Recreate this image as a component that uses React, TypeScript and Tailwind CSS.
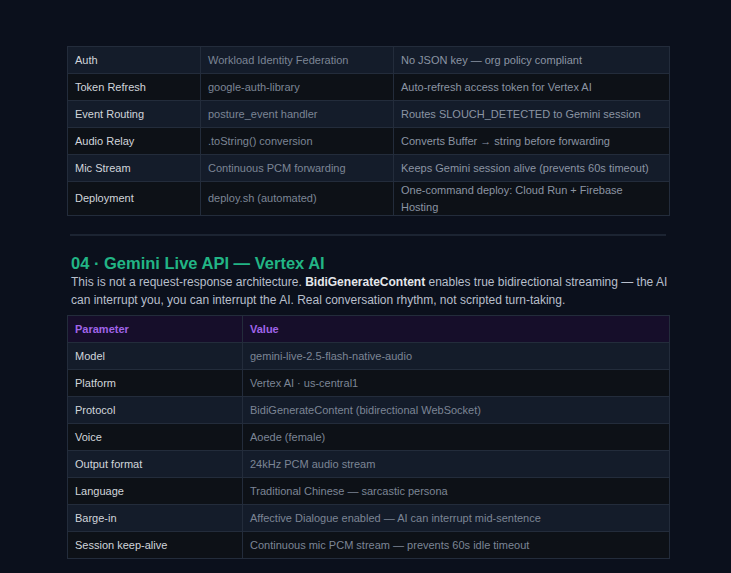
const rows1 = [
  ["Auth", "Workload Identity Federation", "No JSON key — org policy compliant"],
  ["Token Refresh", "google-auth-library", "Auto-refresh access token for Vertex AI"],
  ["Event Routing", "posture_event handler", "Routes SLOUCH_DETECTED to Gemini session"],
  ["Audio Relay", ".toString() conversion", "Converts Buffer → string before forwarding"],
  ["Mic Stream", "Continuous PCM forwarding", "Keeps Gemini session alive (prevents 60s timeout)"],
  ["Deployment", "deploy.sh (automated)", "One-command deploy: Cloud Run + Firebase Hosting"],
];

const rows2 = [
  ["Model", "gemini-live-2.5-flash-native-audio"],
  ["Platform", "Vertex AI · us-central1"],
  ["Protocol", "BidiGenerateContent (bidirectional WebSocket)"],
  ["Voice", "Aoede (female)"],
  ["Output format", "24kHz PCM audio stream"],
  ["Language", "Traditional Chinese — sarcastic persona"],
  ["Barge-in", "Affective Dialogue enabled — AI can interrupt mid-sentence"],
  ["Session keep-alive", "Continuous mic PCM stream — prevents 60s idle timeout"],
];

const rowBg = (i: number) => (i % 2 === 0 ? "bg-[#141c2a]" : "bg-[#0d1117]");

const App = () => {
  return (
    <div className="h-[573px] overflow-hidden bg-[#0b101c] pt-[46px] font-[Liberation_Sans,Arial,sans-serif] text-[11px]">
      <div className="ml-[67px] w-[603px]">
        <table className="w-full border-collapse border border-[#232c3b]">
          <tbody>
            {rows1.map((r, i) => (
              <tr key={i} className={`h-[27px] ${rowBg(i)}`}>
                <td className="w-[133px] border border-[#232c3b] px-[7px] text-[#d1d5db]">{r[0]}</td>
                <td className="w-[193px] border border-[#232c3b] px-[7px] text-[#7c8595]">{r[1]}</td>
                <td className="border border-[#232c3b] px-[7px] text-[#8b94a3]">{r[2]}</td>
              </tr>
            ))}
          </tbody>
        </table>
        <div className="ml-[3px] mr-[4px] mt-[18px] h-[2px] bg-[#1c2432]" />
        <h2 className="ml-[4px] mt-[17px] text-[16.5px] font-bold leading-[20px] text-[#22b585]">
          04 · Gemini Live API — Vertex AI
        </h2>
        <p className="ml-[4px] text-[12px] leading-[18px] text-[#b8bfcb]">
          This is not a request-response architecture. <b className="text-[#e5e7eb]">BidiGenerateContent</b> enables true
          bidirectional streaming — the AI can interrupt you, you can interrupt the AI. Real conversation rhythm, not
          scripted turn-taking.
        </p>
        <table className="mt-[6px] w-full border-collapse border border-[#232c3b]">
          <thead>
            <tr className="h-[27px] bg-[#160e2a] text-left font-bold text-[#a064e8]">
              <th className="w-[175px] border border-[#232c3b] px-[7px]">Parameter</th>
              <th className="border border-[#232c3b] px-[7px]">Value</th>
            </tr>
          </thead>
          <tbody>
            {rows2.map((r, i) => (
              <tr key={i} className={`h-[27px] ${rowBg(i)}`}>
                <td className="border border-[#232c3b] px-[7px] text-[#d1d5db]">{r[0]}</td>
                <td className="border border-[#232c3b] px-[7px] text-[#7c8595]">{r[1]}</td>
              </tr>
            ))}
          </tbody>
        </table>
        <div className="ml-[3px] mr-[4px] mt-[18px] h-[2px] bg-[#1c2432]" />
      </div>
    </div>
  );
};

export default App;
